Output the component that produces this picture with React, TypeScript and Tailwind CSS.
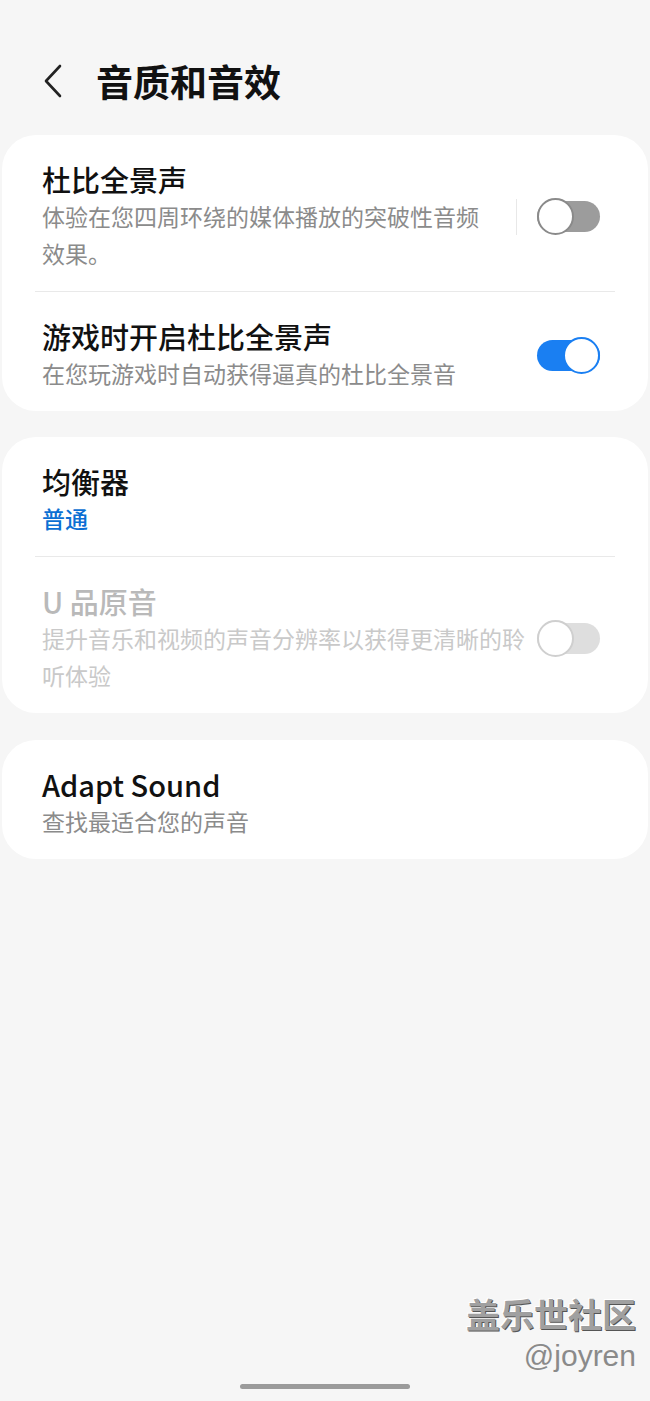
import React from "react";

const font = { fontFamily: '"Noto Sans CJK SC", "Noto Sans", sans-serif' };

type ToggleProps = { on?: boolean; disabled?: boolean };

// Samsung-style switch: track 31px high, 37px knob
const Toggle = ({ on = false, disabled = false }: ToggleProps) => {
  const track = on ? "bg-[#1a7ff2]" : disabled ? "bg-[#dedede]" : "bg-[#9c9c9c]";
  const knob = on
    ? "right-0 border-[#1a7ff2]"
    : disabled
    ? "left-0 border-[#cfcfcf]"
    : "left-0 border-[#8a8a8a]";
  return (
    <div className="relative w-[63px] h-[37px] shrink-0">
      <div className={`absolute inset-x-0 top-[3px] h-[31px] rounded-full ${track}`} />
      <div className={`absolute top-0 w-[37px] h-[37px] rounded-full bg-white border-2 ${knob}`} />
    </div>
  );
};

const Divider = () => <div className="mx-[33px] h-px bg-[#e9e9e9]" />;

const Row = ({
  title,
  sub,
  subClass = "text-[#8b8b8b]",
  titleClass = "text-[#111]",
  right,
  textWidth = "w-[460px]",
}: {
  title: string;
  sub: string;
  subClass?: string;
  titleClass?: string;
  right?: React.ReactNode;
  textWidth?: string;
}) => (
  <div className="flex items-center pl-[40px] pr-[48px] pt-[26px] pb-[19px]">
    <div className={`flex flex-col ${textWidth}`}>
      <div className={`text-[29px] leading-[37px] font-medium ${titleClass}`}>{title}</div>
      <div className={`text-[23px] leading-[37px] ${subClass}`}>{sub}</div>
    </div>
    {right && <div className="ml-auto flex items-center">{right}</div>}
  </div>
);

export default function App() {
  return (
    <div className="relative w-[650px] h-[1401px] bg-[#f6f6f6] overflow-hidden" style={font}>
      {/* header */}
      <div className="flex items-center pt-[59px] pb-[32px] pl-[42px]">
        <svg width="22" height="34" viewBox="0 0 22 34" className="mr-[32px]">
          <polyline
            points="18,2 4,17 18,32"
            fill="none"
            stroke="#222"
            strokeWidth="2.6"
            strokeLinecap="round"
            strokeLinejoin="round"
          />
        </svg>
        <div className="text-[37px] leading-[44px] font-bold text-[#111]">音质和音效</div>
      </div>

      {/* card 1 */}
      <div className="mx-[2px] bg-white rounded-[34px]">
        <Row
          title="杜比全景声"
          sub="体验在您四周环绕的媒体播放的突破性音频效果。"
          textWidth="w-[445px]"
          right={
            <>
              <div className="w-px h-[36px] bg-[#e8e8e8] mr-[20px]" />
              <Toggle />
            </>
          }
        />
        <Divider />
        <Row
          title="游戏时开启杜比全景声"
          sub="在您玩游戏时自动获得逼真的杜比全景音"
          textWidth="w-[480px]"
          right={<Toggle on />}
        />
      </div>

      {/* card 2 */}
      <div className="mx-[2px] mt-[26px] bg-white rounded-[34px]">
        <Row title="均衡器" sub="普通" subClass="text-[#0b6fd3] font-medium" />
        <Divider />
        <Row
          title="U 品原音"
          titleClass="text-[#b9b9b9]"
          sub="提升音乐和视频的声音分辨率以获得更清晰的聆听体验"
          subClass="text-[#c9c9c9]"
          textWidth="w-[490px]"
          right={<Toggle disabled />}
        />
      </div>

      {/* card 3 */}
      <div className="mx-[2px] mt-[27px] bg-white rounded-[34px]">
        <Row title="Adapt Sound" sub="查找最适合您的声音" />
      </div>

      {/* watermark */}
      <div className="absolute right-[14px] top-[1292px] flex flex-col items-end">
        <div className="text-[34px] leading-[44px] font-bold text-[#a0a0a0] [text-shadow:1px_1px_0_#555,-1px_-1px_0_#fff]">
          盖乐世社区
        </div>
        <div
          className="text-[30px] leading-[40px] text-[#8a8a8a]"
          style={{ fontFamily: '"Liberation Sans", Arial, sans-serif' }}
        >
          @joyren
        </div>
      </div>

      {/* home indicator */}
      <div className="absolute left-[240px] top-[1384px] w-[170px] h-[5px] rounded-full bg-[#9b9b9b]" />
    </div>
  );
}
